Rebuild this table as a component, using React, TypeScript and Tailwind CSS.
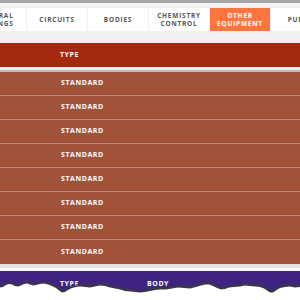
import React from "react";

const tabs = [
  { label: ["GENERAL", "FITTINGS"], active: false },
  { label: ["CIRCUITS"], active: false },
  { label: ["BODIES"], active: false },
  { label: ["CHEMISTRY", "CONTROL"], active: false },
  { label: ["OTHER", "EQUIPMENT"], active: true },
  { label: ["PUMPS"], active: false },
];

const rows = Array.from({ length: 8 }, () => "STANDARD");

// jagged top edge of the torn-paper strip
const edge: [number, number][] = [
  [0, 285], [3, 284.5], [6, 282.5], [9, 281.5], [12, 282], [15, 283.5], [18, 284], [21, 283],
  [24, 281.5], [27, 281], [30, 282], [33, 283], [36, 282.5], [40, 281.5], [44, 281], [48, 282],
  [52, 283.5], [56, 285.5], [59, 288], [62, 290], [65, 289.5], [68, 287.5], [72, 285.5], [76, 284.5],
  [80, 284], [85, 284.5], [90, 285], [95, 284], [100, 283], [105, 283.5], [110, 285], [115, 286],
  [120, 287], [125, 288.5], [130, 289], [135, 289.5], [140, 290], [145, 289.5], [150, 288.5], [155, 287.5],
  [160, 287], [166, 287], [172, 286], [178, 285], [184, 285.5], [190, 286], [196, 284.5], [201, 283],
  [205, 282], [209, 282], [213, 283.5], [217, 285.5], [221, 287], [225, 286.5], [229, 285], [234, 284.5],
  [240, 284], [245, 283], [250, 283.5], [255, 284], [260, 284.5], [264, 286], [267, 288], [270, 290],
  [273, 290], [276, 288], [280, 285.5], [285, 284.5], [290, 284], [295, 285], [300, 284.5],
];

const edgePath = (dy: number) =>
  "M0 300 " + edge.map(([x, y]) => `L${x} ${y + dy}`).join(" ") + " L300 300 Z";

export default function App() {
  return (
    <div
      className="relative w-[300px] h-[300px] overflow-hidden bg-[#f1f1f1]"
      style={{ fontFamily: '"Open Sans", "Liberation Sans", sans-serif' }}
    >
      <div className="h-[3px] bg-[#a4a4a4]" />

      {/* category tabs */}
      <div className="mt-[5px] ml-[-34px] flex gap-[1px] h-[23px]">
        {tabs.map((t, i) => (
          <div
            key={i}
            className={`w-[60px] shrink-0 flex flex-col items-center justify-center text-[6.5px] font-bold leading-[8px] tracking-[0.12em] ${
              t.active ? "bg-[#fe7540] text-white" : "bg-white text-[#555555]"
            }`}
          >
            {t.label.map((l) => (
              <span key={l} className="whitespace-nowrap">{l}</span>
            ))}
          </div>
        ))}
      </div>

      {/* table header */}
      <div className="mt-[12px] h-[24px] bg-[#a32a11] flex items-center pl-[60px] text-white text-[7px] font-bold tracking-[0.08em]">
        TYPE
      </div>
      <div className="h-[3px] bg-[#eeeeee]" />
      <div className="h-[2px] bg-[#bdbdbd]" />

      {/* table body */}
      <div className="bg-[#a0523a]">
        {rows.map((r, i) => (
          <div
            key={i}
            className={`flex items-center pl-[61px] text-white text-[7px] font-bold tracking-[0.08em] ${
              i < rows.length - 1 ? "h-[24px] border-b border-[#c38b79]" : "h-[24px]"
            }`}
          >
            {r}
          </div>
        ))}
      </div>

      <div className="h-[4px] bg-[#e4e4e4]" />
      <div className="h-[3px] bg-[#f8f8f8]" />

      {/* next table header */}
      <div className="h-[30px] bg-[#3e2480] flex items-start pt-[8px] text-white text-[7px] font-bold tracking-[0.08em]">
        <span className="ml-[60px]">TYPE</span>
        <span className="ml-[68px]">BODY</span>
      </div>

      {/* torn paper strip */}
      <svg
        className="absolute left-0 top-[276px]"
        width="300"
        height="24"
        viewBox="0 276 300 24"
      >
        <defs>
          <filter id="tornBlur" x="-5%" y="-50%" width="110%" height="200%">
            <feGaussianBlur stdDeviation="1" />
          </filter>
        </defs>
        <path d={edgePath(0.5)} fill="#3a3a3a" filter="url(#tornBlur)" />
        <path d={edgePath(2.5)} fill="#ffffff" />
      </svg>
    </div>
  );
}
